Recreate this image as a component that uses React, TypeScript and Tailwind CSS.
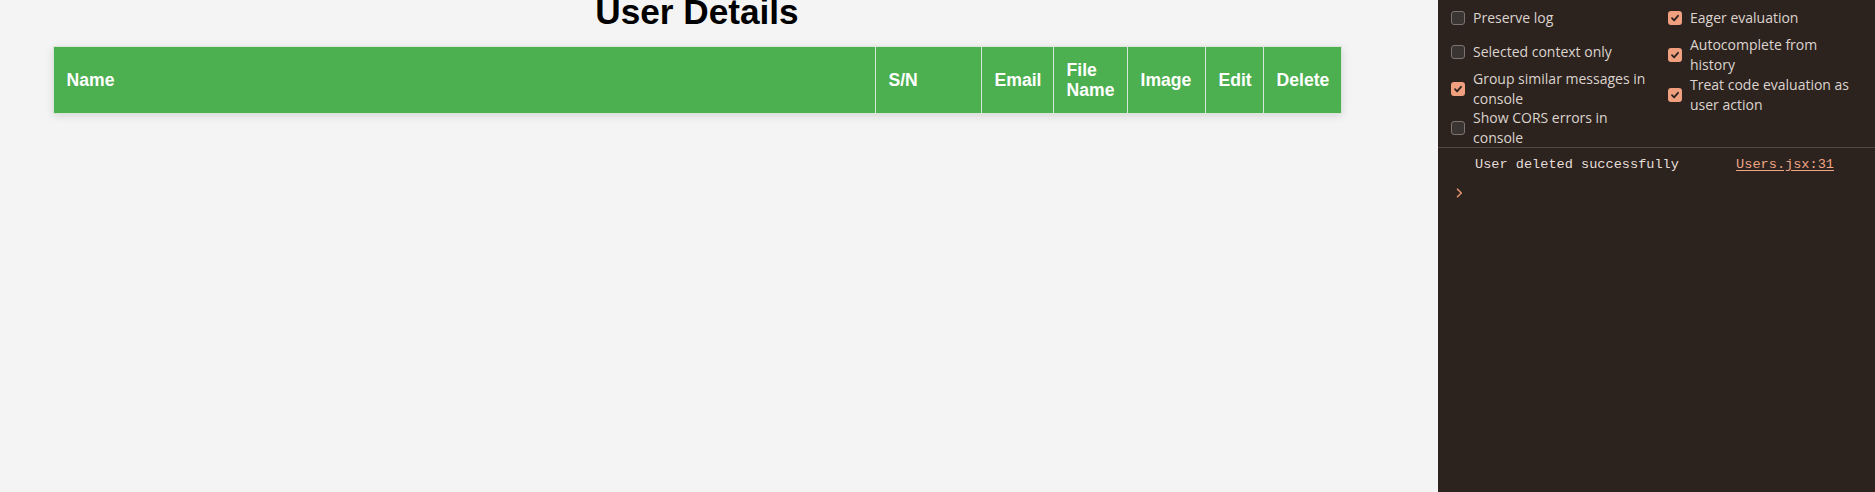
import React from "react";

const Check = () => (
  <svg width="10" height="10" viewBox="0 0 10 10" fill="none">
    <path d="M2 5.2 L4.1 7.3 L8 2.8" stroke="#2c231f" strokeWidth="1.8" strokeLinecap="round" strokeLinejoin="round" />
  </svg>
);

const Box = ({ checked }: { checked: boolean }) =>
  checked ? (
    <div className="w-[14px] h-[14px] shrink-0 rounded-[3px] bg-[#f09f7f] flex items-center justify-center">
      <Check />
    </div>
  ) : (
    <div className="w-[14px] h-[14px] shrink-0 rounded-[3px] bg-[#3a3532] border border-[#7b7470]" />
  );

const Opt = ({ checked, lines, h }: { checked: boolean; lines: string[]; h: string }) => (
  <div className={`flex items-center gap-[8px] ${h}`}>
    <Box checked={checked} />
    <div className="leading-[20px]">
      {lines.map((l, i) => (
        <div key={i} className="whitespace-nowrap">
          {l}
        </div>
      ))}
    </div>
  </div>
);

export default function App() {
  const th = "bg-[#4caf50] text-white text-left font-bold px-[13px] py-[13px] leading-[20px] border border-[#d9e6d9]";
  return (
    <div className="flex w-[1875px] h-[492px] overflow-hidden">
      <div className="w-[1438px] h-full bg-[#f4f4f4]" style={{ fontFamily: '"Liberation Sans", Arial, sans-serif' }}>
        <div className="w-[1394px] flex flex-col items-center">
          <h1 className="text-[35.2px] font-bold leading-[40px] mt-[-8px] text-black">User Details</h1>
          <table className="mt-[14px] w-[1288px] table-fixed border-collapse text-[17.6px] shadow-[0_2px_8px_rgba(0,0,0,0.12)] border-t border-[#cfcfcf]">
            <colgroup>
              <col className="w-[822px]" />
              <col className="w-[106px]" />
              <col className="w-[72px]" />
              <col className="w-[74px]" />
              <col className="w-[78px]" />
              <col className="w-[58px]" />
              <col className="w-[78px]" />
            </colgroup>
            <thead>
              <tr>
                <th className={`${th} whitespace-nowrap`}>Name</th>
                <th className={`${th} whitespace-nowrap`}>S/N</th>
                <th className={`${th} whitespace-nowrap`}>Email</th>
                <th className={th}>File Name</th>
                <th className={`${th} whitespace-nowrap`}>Image</th>
                <th className={`${th} whitespace-nowrap`}>Edit</th>
                <th className={`${th} whitespace-nowrap`}>Delete</th>
              </tr>
            </thead>
          </table>
        </div>
      </div>
      <div className="flex-1 h-full bg-[#2c231f] text-[#dcd3ce] text-[14px]" style={{ fontFamily: '"Open Sans", "Noto Sans", sans-serif' }}>
        <div className="flex h-[148px] pt-[1px] border-b border-[#54453f]">
          <div className="w-[218px] pl-[13px] flex flex-col">
            <Opt checked={false} lines={["Preserve log"]} h="h-[34px]" />
            <Opt checked={false} lines={["Selected context only"]} h="h-[34px]" />
            <Opt checked={true} lines={["Group similar messages in", "console"]} h="h-[39px]" />
            <Opt checked={false} lines={["Show CORS errors in", "console"]} h="h-[39px]" />
          </div>
          <div className="flex-1 pl-[12px] flex flex-col">
            <Opt checked={true} lines={["Eager evaluation"]} h="h-[34px]" />
            <Opt checked={true} lines={["Autocomplete from", "history"]} h="h-[40px]" />
            <Opt checked={true} lines={["Treat code evaluation as", "user action"]} h="h-[40px]" />
          </div>
        </div>
        <div
          className="flex justify-between pl-[37px] pr-[41px] pt-[7px] pb-[7px] text-[13.6px] leading-[20px]"
          style={{ fontFamily: '"Liberation Mono", "DejaVu Sans Mono", monospace' }}
        >
          <span className="text-[#e6ddd8] whitespace-pre">User deleted successfully</span>
          <span className="text-[#f0a586] underline underline-offset-2">Users.jsx:31</span>
        </div>
        <div className="pl-[18px] pt-[6px]">
          <svg width="7" height="10" viewBox="0 0 7 10" fill="none">
            <path d="M1.5 1.2 L5.3 5 L1.5 8.8" stroke="#e3916f" strokeWidth="1.6" strokeLinecap="round" strokeLinejoin="round" />
          </svg>
        </div>
      </div>
    </div>
  );
}
